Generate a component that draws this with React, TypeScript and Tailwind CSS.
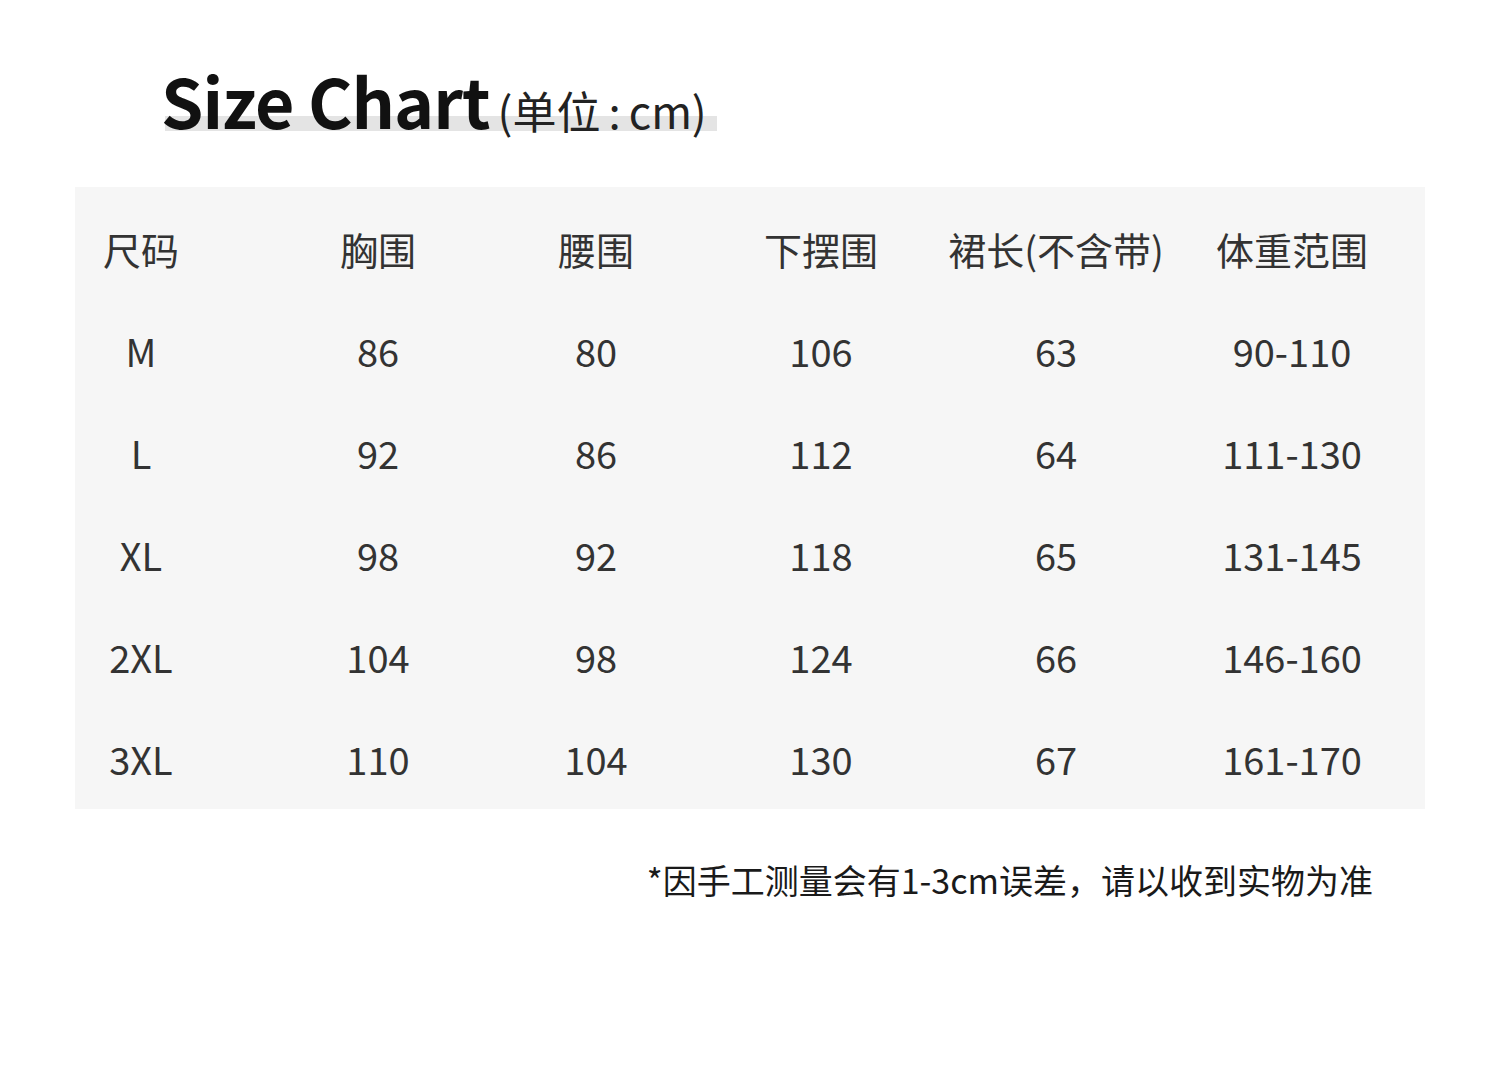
const FONT = '"Noto Sans CJK SC", "Noto Sans", sans-serif'

// column widths + left gaps so every column's centre lands where the chart has it
const cols = [
  'w-[132px]',
  'ml-[71px] w-[200px]',
  'ml-[18px] w-[200px]',
  'ml-[25px] w-[200px]',
  'ml-[15px] w-[240px]',
  'ml-[6px] w-[220px]',
]

const header = ['尺码', '胸围', '腰围', '下摆围', '裙长(不含带)', '体重范围']

const rows = [
  ['M', '86', '80', '106', '63', '90-110'],
  ['L', '92', '86', '112', '64', '111-130'],
  ['XL', '98', '92', '118', '65', '131-145'],
  ['2XL', '104', '98', '124', '66', '146-160'],
  ['3XL', '110', '104', '130', '67', '161-170'],
]

const Row = ({ cells }: { cells: string[] }) => (
  <div className="flex h-[102px] items-center">
    {cells.map((c, i) => (
      <div key={i} className={`${cols[i]} shrink-0 text-center whitespace-nowrap`}>
        {c}
      </div>
    ))}
  </div>
)

export default function App() {
  return (
    <div className="w-[1500px] h-[1071px] bg-white text-[#333]" style={{ fontFamily: FONT }}>
      {/* Title */}
      <div className="pt-[66px] pl-[161px]">
        <div className="relative inline-flex items-baseline">
          <span className="absolute left-[4px] right-[-10px] bottom-[3px] h-[15px] bg-[#e4e4e4]" />
          <span className="relative text-[68px] font-bold leading-none tracking-[-1px] text-[#111]">Size Chart</span>
          <span className="relative ml-[8px] text-[44px] leading-none text-[#222]">
            (单位<span className="mx-[8px]">:</span>cm)
          </span>
        </div>
      </div>

      {/* Table */}
      <div className="mx-[75px] mt-[53px] h-[622px] bg-[#f6f6f6] pt-[11px] text-[38px] leading-none">
        <Row cells={header} />
        {rows.map((r, i) => (
          <Row key={i} cells={r} />
        ))}
      </div>

      {/* Note */}
      <div className="mt-[54px] flex justify-end pr-[127px] text-[34px] leading-none text-[#1a1a1a]">
        *因手工测量会有1-3cm误差，请以收到实物为准
      </div>
    </div>
  )
}
